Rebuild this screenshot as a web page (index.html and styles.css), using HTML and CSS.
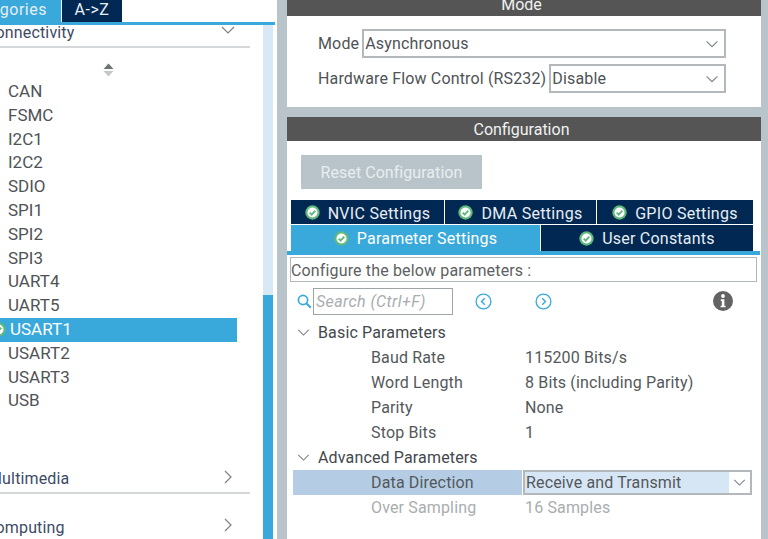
FILE: index.html
```html
<!DOCTYPE html>
<html lang="en">
<head>
    <meta charset="UTF-8">
    <meta name="viewport" content="width=device-width, initial-scale=1.0">
    <title>USART1 Configuration</title>
    <link rel="stylesheet" href="styles.css">
</head>
<body>
    <svg class="defs" width="0" height="0">
        <symbol id="ok" viewBox="0 0 15 15">
            <circle cx="7.5" cy="7.5" r="7.2" fill="#5fb97c"/>
            <circle cx="7.5" cy="7.5" r="5" fill="#fff"/>
            <path d="M4.7 7.6l2 2 3.6-3.9" fill="none" stroke="#5fb97c" stroke-width="1.9"/>
        </symbol>
        <symbol id="down" viewBox="0 0 14 8">
            <path d="M1 1l6 6 6-6" fill="none" stroke="#7d8286" stroke-width="1.2"/>
        </symbol>
        <symbol id="right" viewBox="0 0 8 14">
            <path d="M1 1l6 6-6 6" fill="none" stroke="#7d8286" stroke-width="1.2"/>
        </symbol>
    </svg>

    <div class="app">
        <!-- left side: peripheral tree -->
        <aside class="side">
            <div class="side-tabs">
                <div class="side-tab active"><span>Categories</span></div>
                <div class="side-tab">A-&gt;Z</div>
            </div>
            <div class="side-body">
                <div class="tree">
                    <div class="group open">
                        <span class="group-name">Connectivity</span>
                        <svg class="chev-down"><use href="#down"/></svg>
                    </div>
                    <div class="sorter">
                        <svg width="11" height="14" viewBox="0 0 11 14">
                            <path d="M5.5 0.5L10.5 6H0.5z" fill="#6f7477"/>
                            <path d="M5.5 13.5L10.5 8H0.5z" fill="#c4c8ca"/>
                        </svg>
                    </div>
                    <ul class="periph">
                        <li>CAN</li>
                        <li>FSMC</li>
                        <li>I2C1</li>
                        <li>I2C2</li>
                        <li>SDIO</li>
                        <li>SPI1</li>
                        <li>SPI2</li>
                        <li>SPI3</li>
                        <li>UART4</li>
                        <li>UART5</li>
                        <li class="selected"><svg class="sel-icon"><use href="#ok"/></svg>USART1</li>
                        <li>USART2</li>
                        <li>USART3</li>
                        <li>USB</li>
                    </ul>
                    <div class="group multimedia">
                        <span class="group-name">Multimedia</span>
                        <svg class="chev-right"><use href="#right"/></svg>
                    </div>
                    <div class="group computing">
                        <span class="group-name">Computing</span>
                        <svg class="chev-right"><use href="#right"/></svg>
                    </div>
                </div>
                <div class="scrollbar"><div class="thumb"></div></div>
            </div>
        </aside>

        <!-- right side: mode + configuration -->
        <main class="main">
            <section class="mode">
                <div class="bar bar-mode">Mode</div>
                <div class="mode-body">
                    <div class="mode-row">
                        <label>Mode</label>
                        <div class="combo"><span>Asynchronous</span><svg class="chev-down"><use href="#down"/></svg></div>
                    </div>
                    <div class="mode-row">
                        <label>Hardware Flow Control (RS232)</label>
                        <div class="combo"><span>Disable</span><svg class="chev-down"><use href="#down"/></svg></div>
                    </div>
                </div>
            </section>

            <section class="config">
                <div class="bar">Configuration</div>
                <button class="reset">Reset Configuration</button>
                <div class="tabs">
                    <div class="tab-row top">
                        <div class="tab nvic"><svg class="ok"><use href="#ok"/></svg>NVIC Settings</div>
                        <div class="tab dma"><svg class="ok"><use href="#ok"/></svg>DMA Settings</div>
                        <div class="tab gpio"><svg class="ok"><use href="#ok"/></svg>GPIO Settings</div>
                    </div>
                    <div class="tab-row bottom">
                        <div class="tab active"><svg class="ok"><use href="#ok"/></svg>Parameter Settings</div>
                        <div class="tab"><svg class="ok"><use href="#ok"/></svg>User Constants</div>
                    </div>
                </div>
                <div class="describe">Configure the below parameters :</div>
                <div class="tools">
                    <svg class="magnifier" width="15" height="15" viewBox="0 0 15 15">
                        <circle cx="6" cy="6" r="4.6" fill="none" stroke="#39a9dc" stroke-width="1.7"/>
                        <path d="M9.5 9.5l4.3 4.3" stroke="#39a9dc" stroke-width="2"/>
                    </svg>
                    <div class="search">Search (Ctrl+F)</div>
                    <svg class="nav prev" width="17" height="17" viewBox="0 0 17 17">
                        <circle cx="8.5" cy="8.5" r="7.4" fill="none" stroke="#39a9dc" stroke-width="1.3"/>
                        <path d="M9.8 5.2L6.5 8.5l3.3 3.3" fill="none" stroke="#39a9dc" stroke-width="1.4"/>
                    </svg>
                    <svg class="nav next" width="17" height="17" viewBox="0 0 17 17">
                        <circle cx="8.5" cy="8.5" r="7.4" fill="none" stroke="#39a9dc" stroke-width="1.3"/>
                        <path d="M7.2 5.2l3.3 3.3-3.3 3.3" fill="none" stroke="#39a9dc" stroke-width="1.4"/>
                    </svg>
                    <svg class="info" width="20" height="20" viewBox="0 0 20 20">
                        <circle cx="10" cy="10" r="10" fill="#636363"/>
                        <circle cx="10" cy="5" r="1.9" fill="#fff"/>
                        <path d="M7.8 8.3h3.6v6.4h1.2v1.6H7.6v-1.6h1.2v-4.8h-1z" fill="#fff"/>
                    </svg>
                </div>
                <div class="params">
                    <div class="param-head"><svg class="chev-small"><use href="#down"/></svg>Basic Parameters</div>
                    <div class="param"><span>Baud Rate</span><span>115200 Bits/s</span></div>
                    <div class="param"><span>Word Length</span><span>8 Bits (including Parity)</span></div>
                    <div class="param"><span>Parity</span><span>None</span></div>
                    <div class="param"><span>Stop Bits</span><span>1</span></div>
                    <div class="param-head"><svg class="chev-small"><use href="#down"/></svg>Advanced Parameters</div>
                    <div class="param current">
                        <span>Data Direction</span>
                        <div class="param-combo"><span>Receive and Transmit</span><i><svg class="chev-small"><use href="#down"/></svg></i></div>
                    </div>
                    <div class="param off"><span>Over Sampling</span><span>16 Samples</span></div>
                </div>
            </section>
        </main>
    </div>
</body>
</html>
```

FILE: styles.css
```css
* {
    box-sizing: border-box;
}
html, body {
    margin: 0;
    height: 539px;
    overflow: hidden;
}
body {
    font-family: Roboto, "Liberation Sans", sans-serif;
    font-size: 16px;
    letter-spacing: 0.15px;
    color: #4f5356;
    background: #b9c4ca;
}
.defs {
    position: absolute;
}
.app {
    display: flex;
    height: 539px;
}

/* left side */
.side {
    width: 277px;
    height: 539px;
    background: #fff;
    overflow: hidden;
}
.side-tabs {
    display: flex;
    gap: 1px;
    height: 25px;
    width: 275px;
    border-bottom: 3px solid #39a9dc;
}
.side-tab {
    width: 60px;
    background: #002852;
    color: #e8edf2;
    display: flex;
    align-items: center;
    justify-content: center;
    padding-bottom: 3px;
    letter-spacing: 0.5px;
}
.side-tab.active {
    width: 61px;
    background: #39a9dc;
    justify-content: flex-end;
    padding-right: 14px;
    overflow: hidden;
}
.side-body {
    display: flex;
    height: 514px;
}
.tree {
    width: 263px;
    padding-right: 26px;
}
.scrollbar {
    width: 10px;
    background: #d8e8f5;
    padding-top: 270px;
}
.thumb {
    height: 244px;
    background: #39a9dc;
}
.group {
    position: relative;
    height: 24px;
    display: flex;
    align-items: center;
    color: #3d4a66;
}
.group-name {
    white-space: nowrap;
}
.group.open {
    height: 23px;
    width: 250px;
    border-bottom: 2px solid #d3d7da;
    margin-right: -13px;
    align-items: flex-start;
}
.group.open .group-name {
    margin: -2px 0 0 -15px;
}
.group.open .chev-down {
    margin-top: 1px;
}
.chev-down {
    width: 14px;
    height: 8px;
    margin-left: auto;
    margin-right: 15px;
}
.chev-right {
    width: 8px;
    height: 14px;
    margin-left: auto;
    margin-right: 18px;
    margin-bottom: 4px;
}
.sorter {
    display: flex;
    justify-content: center;
    width: 217px;
    height: 32px;
    padding-top: 15px;
}
.periph {
    list-style: none;
    margin: 0;
    padding: 0;
    font-size: 17px;
    letter-spacing: 0;
}
.periph li {
    height: 23.8px;
    line-height: 23.8px;
    padding-left: 8px;
    position: relative;
}
.periph li.selected {
    background: #39a9dc;
    color: #fff;
    padding-left: 10px;
}
.sel-icon {
    position: absolute;
    left: -9px;
    top: 4px;
    width: 15px;
    height: 15px;
}
.group.multimedia {
    margin-top: 52px;
    height: 29px;
    width: 250px;
    margin-right: -13px;
    border-bottom: 2px solid #d3d7da;
}
.group.multimedia .group-name {
    margin-left: -12px;
}
.group.computing {
    margin-top: 21px;
    width: 250px;
    margin-right: -13px;
}
.group.computing .group-name {
    margin-left: -15px;
}
.group.computing .chev-right {
    margin-bottom: 5px;
}

/* right side */
.main {
    width: 474px;
    margin-left: 10px;
}
.bar {
    background: #545554;
    color: #f0f2f2;
    height: 24px;
    display: flex;
    align-items: center;
    justify-content: center;
    padding-right: 5px;
    letter-spacing: 0;
}
.bar-mode {
    height: 16px;
    align-items: flex-end;
    line-height: 22px;
    overflow: hidden;
}
.mode-body {
    background: #fff;
    height: 91px;
    padding: 13px 35px 0 31px;
}
.mode-row {
    display: flex;
    align-items: center;
    gap: 3px;
    height: 29px;
    margin-bottom: 6px;
}
.combo {
    flex: 1;
    height: 29px;
    border: 2px solid #b3b8bc;
    display: flex;
    align-items: center;
    padding-left: 1px;
}
.combo .chev-down {
    margin-right: 5px;
    transform: scale(0.9);
}
.config {
    margin-top: 10px;
    background: #fff;
    height: 422px;
}
.reset {
    display: block;
    margin: 14px 0 11px 14px;
    width: 181px;
    height: 34px;
    border: none;
    background: #b9c4ca;
    color: #e8eef0;
    font: inherit;
    letter-spacing: 0.05px;
}
.tabs {
    padding: 0 7px 0 1px;
    border-bottom: 4px solid #39a9dc;
    width: 473px;
}
.tab-row {
    display: flex;
    gap: 1px;
    margin-left: 3px;
    margin-bottom: 1px;
}
.tab-row.bottom {
    margin-bottom: 0;
}
.tab {
    background: #002852;
    color: #e8edf2;
    display: flex;
    align-items: center;
    justify-content: center;
    gap: 8px;
    letter-spacing: 0.3px;
}
.tab-row.top .tab {
    height: 24px;
    padding-top: 2px;
}
.tab .ok {
    margin-top: -2px;
}
.tab.nvic {
    width: 153px;
}
.tab.dma {
    width: 151px;
}
.tab.gpio {
    width: 156px;
}
.tab-row.bottom .tab {
    height: 26px;
    flex: 212;
    letter-spacing: 0.22px;
}
.tab-row.bottom .tab .ok {
    margin-top: 0;
}
.tab-row.bottom .tab.active {
    flex: 249;
    background: #39a9dc;
    color: #fff;
}
.ok {
    width: 15px;
    height: 15px;
}
.describe {
    margin: 2px 4px 0 3px;
    height: 25px;
    border: 1px solid #b3b8bc;
    line-height: 25px;
    color: #5d5f62;
}
.tools {
    display: flex;
    align-items: center;
    height: 30px;
    margin-top: 4px;
    padding-left: 10px;
}
.search {
    margin-left: 1px;
    width: 140px;
    height: 27px;
    border: 1px solid #9fa4a8;
    color: #a9adb0;
    font-style: italic;
    line-height: 25px;
    padding-left: 2px;
    letter-spacing: 0.4px;
}
.prev {
    margin-left: 22px;
}
.next {
    margin-left: 43px;
}
.info {
    margin-left: auto;
    margin-right: 28px;
}
.params {
    padding: 4px 0 0 6px;
}
.param-head {
    height: 25px;
    display: flex;
    align-items: center;
    gap: 8px;
    padding-left: 4px;
    color: #43484c;
}
.chev-small {
    width: 13px;
    height: 7px;
}
.param {
    display: grid;
    grid-template-columns: 154px 1fr;
    height: 25px;
    align-items: center;
    padding-left: 78px;
    width: 459px;
    color: #54585b;
}
.param.current {
    background: linear-gradient(90deg, #b5cde4 229px, transparent 229px);
    grid-template-columns: 152px 1fr;
}
.param.off {
    color: #a9adb0;
}
.param-combo {
    height: 25px;
    border: 2px solid #b3b8bc;
    display: flex;
    align-items: center;
    background: #d6e6f5;
    padding-left: 1px;
    justify-content: space-between;
}
.param-combo i {
    background: #fff;
    width: 21px;
    height: 21px;
    display: flex;
    align-items: center;
    justify-content: center;
}
```
